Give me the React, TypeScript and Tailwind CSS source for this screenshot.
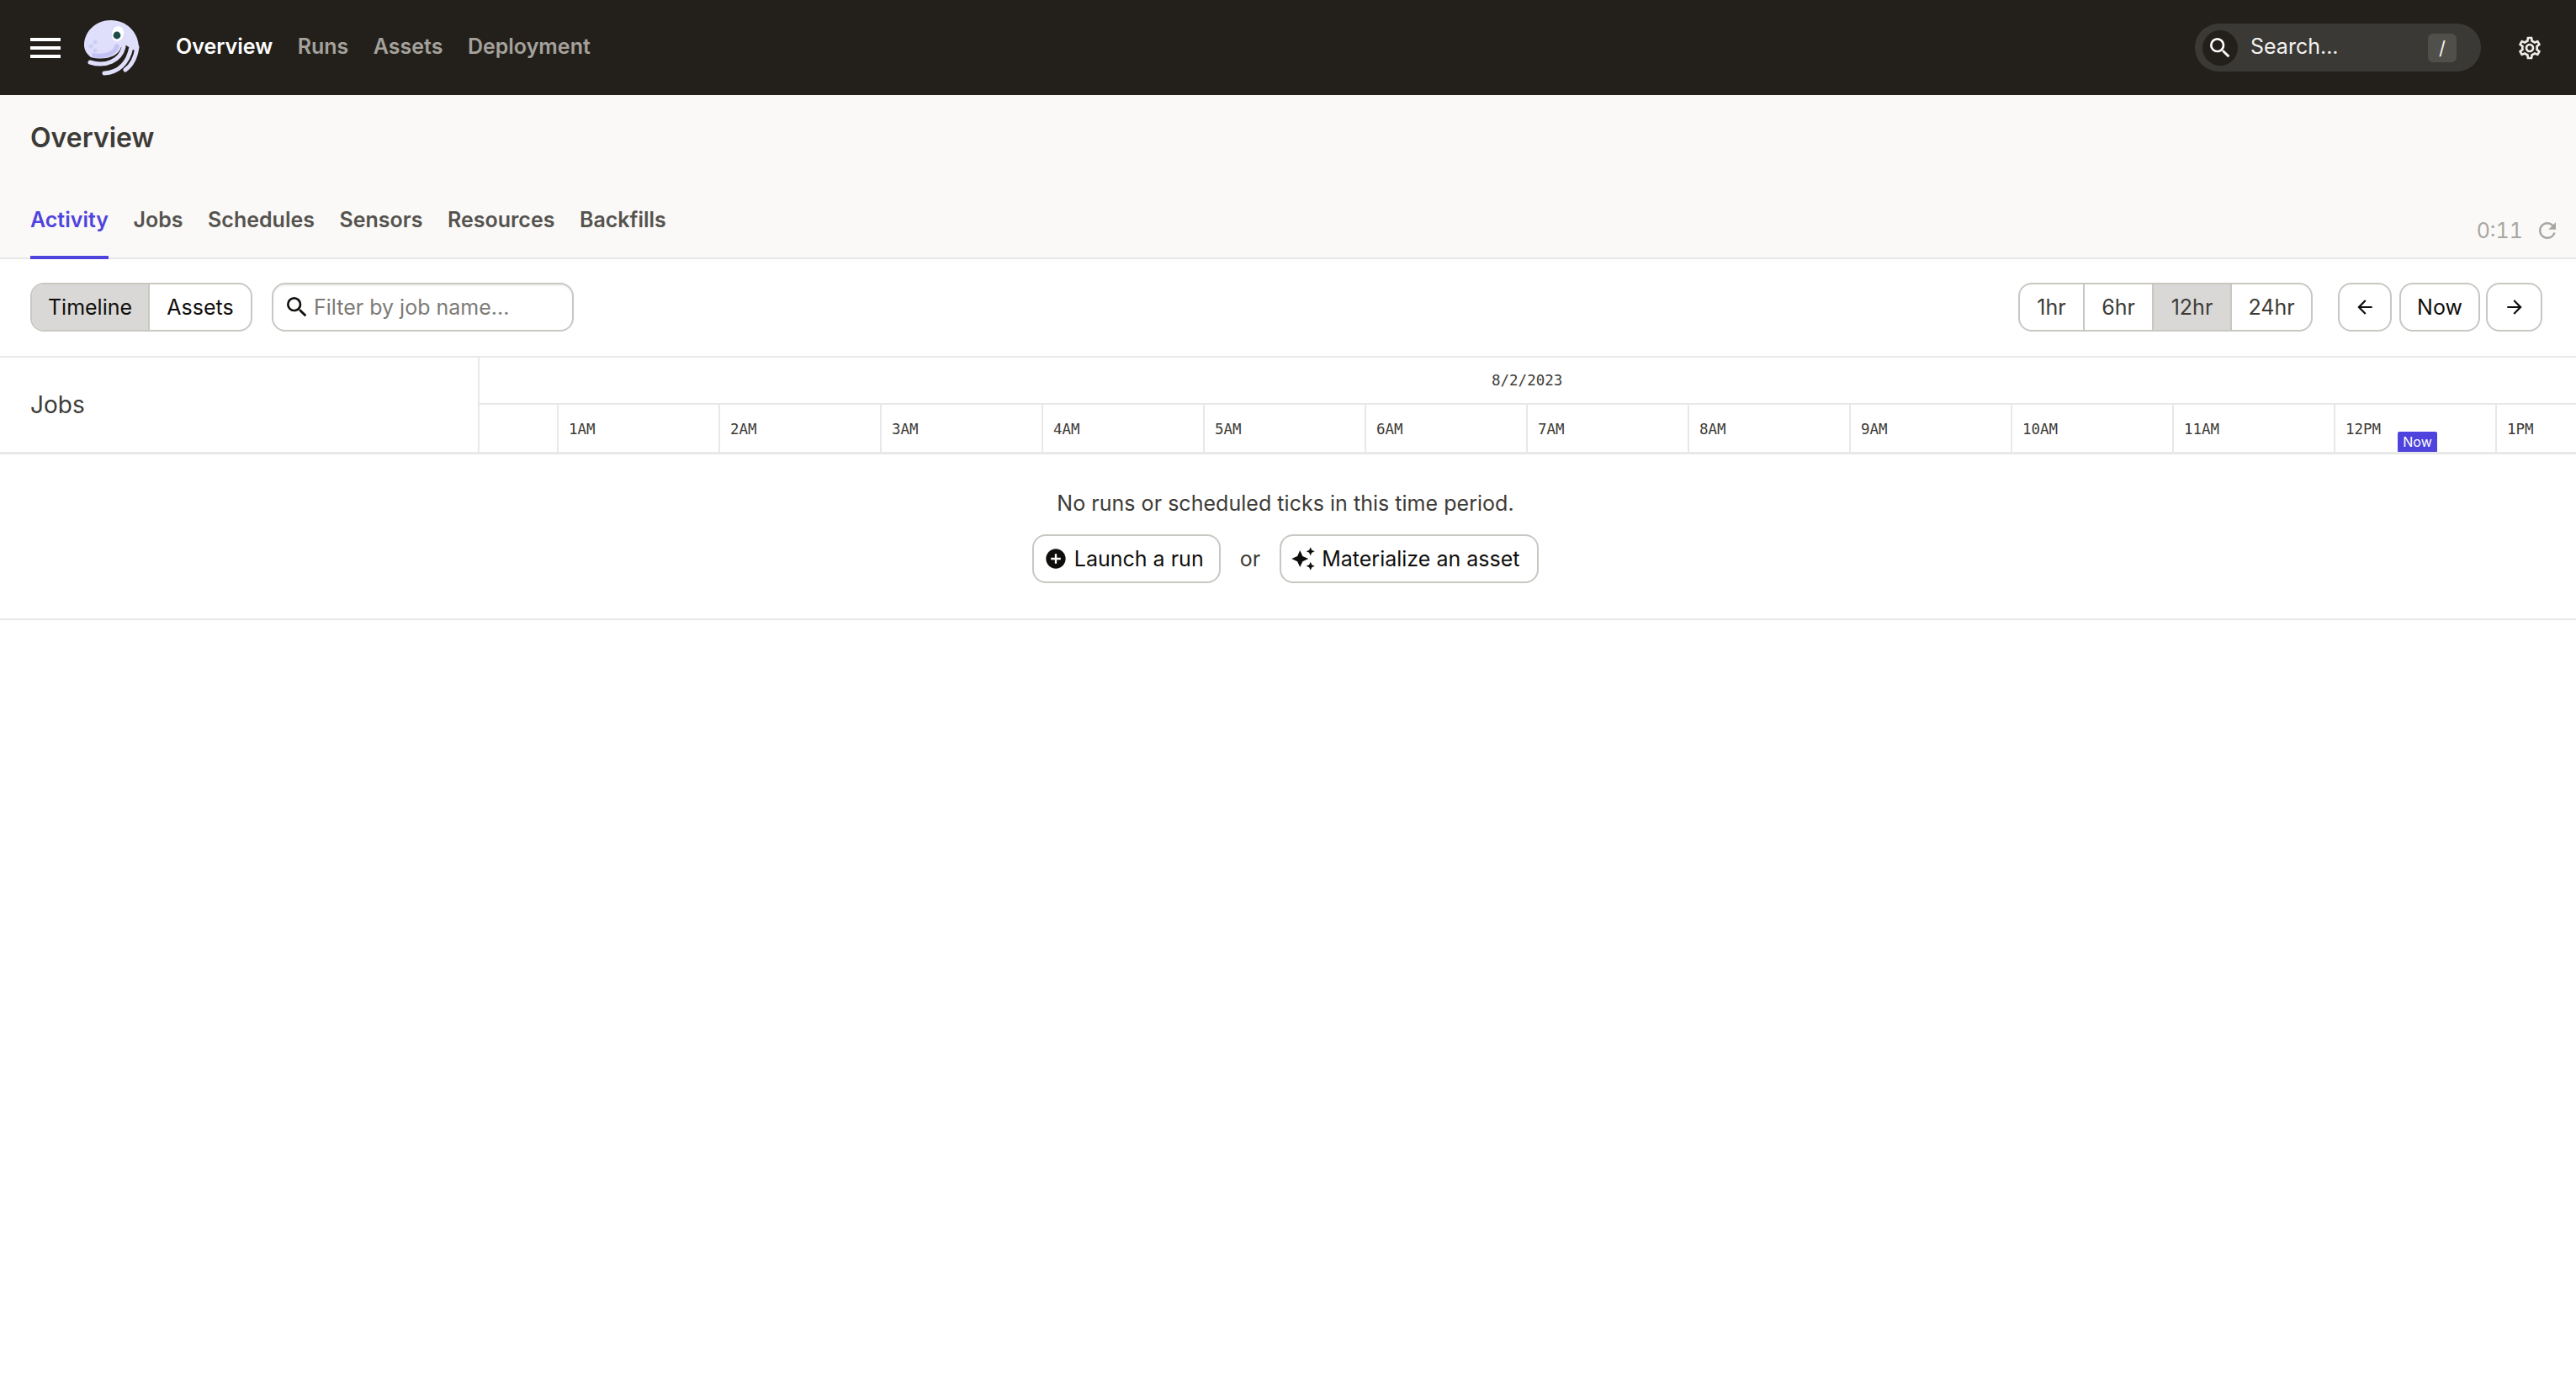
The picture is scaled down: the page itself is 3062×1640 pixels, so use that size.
import React from 'react';
import { MdAddCircle, MdArrowBack, MdArrowForward, MdAutoAwesome, MdMenu, MdOutlineSettings, MdRefresh, MdSearch } from 'react-icons/md';

const navItems = ['Overview', 'Runs', 'Assets', 'Deployment'];
const tabs = ['Activity', 'Jobs', 'Schedules', 'Sensors', 'Resources', 'Backfills'];
const ranges = ['1hr', '6hr', '12hr', '24hr'];
const hours = ['1AM', '2AM', '3AM', '4AM', '5AM', '6AM', '7AM', '8AM', '9AM', '10AM', '11AM', '12PM', '1PM'];

const DagsterLogo = () => (
  <svg viewBox="0 0 66 66" className="w-[66px] h-[66px]">
    <path d="M32 0C50 0 65 14 65 33L60 36L50 30L44 32C40 44 24 48 8 44C3 40 0 35 0 30C0 13 14 0 32 0Z" fill="#dfdffc" />
    <path d="M10 44C24 47 38 43 42 31C40 26 37 28 35 33C32 38 22 41 9 39Z" fill="#c4c4f4" />
    <path d="M7 50C26 56 43 48 47 32" fill="none" stroke="#dfdffc" strokeWidth="5" strokeLinecap="round" />
    <path d="M24 63C40 62 52 52 56 32" fill="none" stroke="#dfdffc" strokeWidth="5" strokeLinecap="round" />
    <path d="M49 59C56 54 61 47 63 32" fill="none" stroke="#dfdffc" strokeWidth="5" strokeLinecap="round" />
    <ellipse cx="40" cy="16" rx="7" ry="9" transform="rotate(12 40 16)" fill="#ffffff" />
    <circle cx="39" cy="18" r="4.4" fill="#1e4a4a" />
    <circle cx="8" cy="31" r="2.6" fill="#cfcff6" />
    <circle cx="13" cy="26" r="2.6" fill="#cfcff6" />
    <circle cx="13" cy="36" r="2.6" fill="#cfcff6" />
  </svg>
);

const App: React.FC = () => {
  return (
    <div className="min-h-screen bg-white text-[25px] leading-[36px] font-['Inter',sans-serif] text-[#3d3b37] whitespace-nowrap">
      {/* Top nav */}
      <div className="h-[113px] bg-[#23201b] flex items-center">
        <MdMenu className="ml-[30px] w-[48px] h-[48px] text-white" />
        <div className="ml-[22px]"><DagsterLogo /></div>
        <div className="ml-[43px] -mt-[3px] flex gap-[29.5px] font-semibold">
          {navItems.map((item, i) => (
            <span key={item} className={i === 0 ? 'text-white' : 'text-[#a5a29c]'}>{item}</span>
          ))}
        </div>
        <div className="ml-auto w-[340px] h-[57px] rounded-[29px] bg-[#3b3935] flex items-center pl-[9px] pr-[29px]">
          <div className="w-[42px] h-[42px] rounded-full bg-[#23201b] flex items-center justify-center">
            <MdSearch className="w-[32px] h-[32px] text-white" />
          </div>
          <span className="ml-[15px] -mt-[4px] text-[#f4f3f1]">Search...</span>
          <span className="ml-auto w-[34px] h-[34px] rounded-[6px] bg-[#514f4a] text-[#f4f3f1] text-[22px] flex items-center justify-center">/</span>
        </div>
        <MdOutlineSettings className="ml-[42px] mr-[39px] w-[32px] h-[32px] text-[#ecebe8]" />
      </div>

      {/* Page header */}
      <div className="h-[195px] bg-[#faf9f7] border-b-2 border-[#e8e7e6] px-[36px] flex flex-col">
        <div className="pt-[29px] text-[32px] leading-[44px] font-semibold">Overview</div>
        <div className="mt-auto flex items-end">
          <div className="flex gap-[29.5px] font-semibold text-[#55534f] -mb-[2px]">
            {tabs.map((tab, i) => (
              <span key={tab} className={i === 0 ? 'h-[65px] text-[#4f43dd] border-b-4 border-[#4f43dd]' : 'h-[65px]'}>{tab}</span>
            ))}
          </div>
          <div className="ml-auto mb-[14px] -mr-[17px] flex items-center gap-[14px] text-[#a8a6a2] tabular-nums">
            <span>0:11</span>
            <MdRefresh className="w-[30px] h-[30px]" />
          </div>
        </div>
      </div>

      {/* Toolbar */}
      <div className="h-[115px] px-[36px] flex items-center pr-[40px] pb-[2px] text-[#0f0e0c]">
        <div className="flex h-[58px] rounded-[16px] border-2 border-[#c9c7c2] overflow-hidden">
          <span className="w-[140px] bg-[#d9d8d6] border-r-2 border-[#c9c7c2] flex items-center justify-center">Timeline</span>
          <span className="w-[120px] flex items-center justify-center">Assets</span>
        </div>
        <div className="ml-[23px] w-[359px] h-[58px] rounded-[16px] border-2 border-[#c9c7c2] shadow-[inset_0_2px_2px_rgba(0,0,0,0.06)] flex items-center pl-[12px]">
          <MdSearch className="w-[32px] h-[32px] shrink-0" />
          <input placeholder="Filter by job name..." className="ml-[4px] w-full outline-none bg-transparent placeholder:text-[#7d7b77]" />
        </div>
        <div className="ml-auto flex h-[58px] rounded-[16px] border-2 border-[#c9c7c2] overflow-hidden text-[#3d3b37]">
          <span className="w-[77px] border-r-2 border-[#c9c7c2] flex items-center justify-center">{ranges[0]}</span>
          <span className="w-[82px] border-r-2 border-[#c9c7c2] flex items-center justify-center">{ranges[1]}</span>
          <span className="w-[93px] bg-[#d9d8d6] border-r-2 border-[#c9c7c2] flex items-center justify-center">{ranges[2]}</span>
          <span className="w-[94px] flex items-center justify-center">{ranges[3]}</span>
        </div>
        <div className="ml-[30px] w-[64px] h-[58px] rounded-[16px] border-2 border-[#c9c7c2] flex items-center justify-center">
          <MdArrowBack className="w-[26px] h-[26px]" />
        </div>
        <div className="ml-[9px] w-[96px] h-[58px] rounded-[16px] border-2 border-[#c9c7c2] flex items-center justify-center">Now</div>
        <div className="ml-[7px] w-[67px] h-[58px] rounded-[16px] border-2 border-[#c9c7c2] flex items-center justify-center">
          <MdArrowForward className="w-[26px] h-[26px]" />
        </div>
      </div>

      {/* Timeline header */}
      <div className="relative h-[117px] border-t-2 border-b-[3px] border-[#e8e8e8] flex overflow-hidden">
        <div className="w-[570px] shrink-0 border-r-2 border-[#e8e8e8] pl-[36px] flex items-center text-[28px]">Jobs</div>
        <div className="flex-1 min-w-0 font-['DejaVu_Sans_Mono',monospace] text-[17.5px] leading-[24px]">
          <div className="h-[56px] border-b-2 border-[#e8e8e8] flex items-center pl-[1203px]">
            <span>8/2/2023</span>
          </div>
          <div className="h-[56px] flex pl-[92px]">
            {hours.map((hour) => (
              <div key={hour} className="w-[192px] shrink-0 border-l-2 border-[#e8e8e8] pl-[12px] pt-[17px]">{hour}</div>
            ))}
          </div>
        </div>
        <span className="absolute left-[2850px] top-[88px] w-[47px] h-[25px] rounded-[2px] bg-[#4f43dd] text-white text-[16px] leading-[25px] text-center">Now</span>
      </div>

      {/* Empty state */}
      <div className="h-[197px] border-b-2 border-[#e8e8e8] flex flex-col items-center pt-[40px] pr-[6px]">
        <div className="tracking-[0.03px]">No runs or scheduled ticks in this time period.</div>
        <div className="mt-[19px] flex items-center text-[#0f0e0c]">
          <div className="w-[224px] h-[58px] rounded-[16px] border-2 border-[#c9c7c2] flex items-center pl-[12px] gap-[8px]">
            <MdAddCircle className="w-[28px] h-[28px] shrink-0" />
            <span>Launch a run</span>
          </div>
          <span className="mx-[23px] text-[#3d3b37]">or</span>
          <div className="w-[308px] h-[58px] rounded-[16px] border-2 border-[#c9c7c2] flex items-center pl-[11px] gap-[7px]">
            <MdAutoAwesome className="w-[30px] h-[30px] shrink-0" />
            <span>Materialize an asset</span>
          </div>
        </div>
      </div>
    </div>
  );
};

export default App;
